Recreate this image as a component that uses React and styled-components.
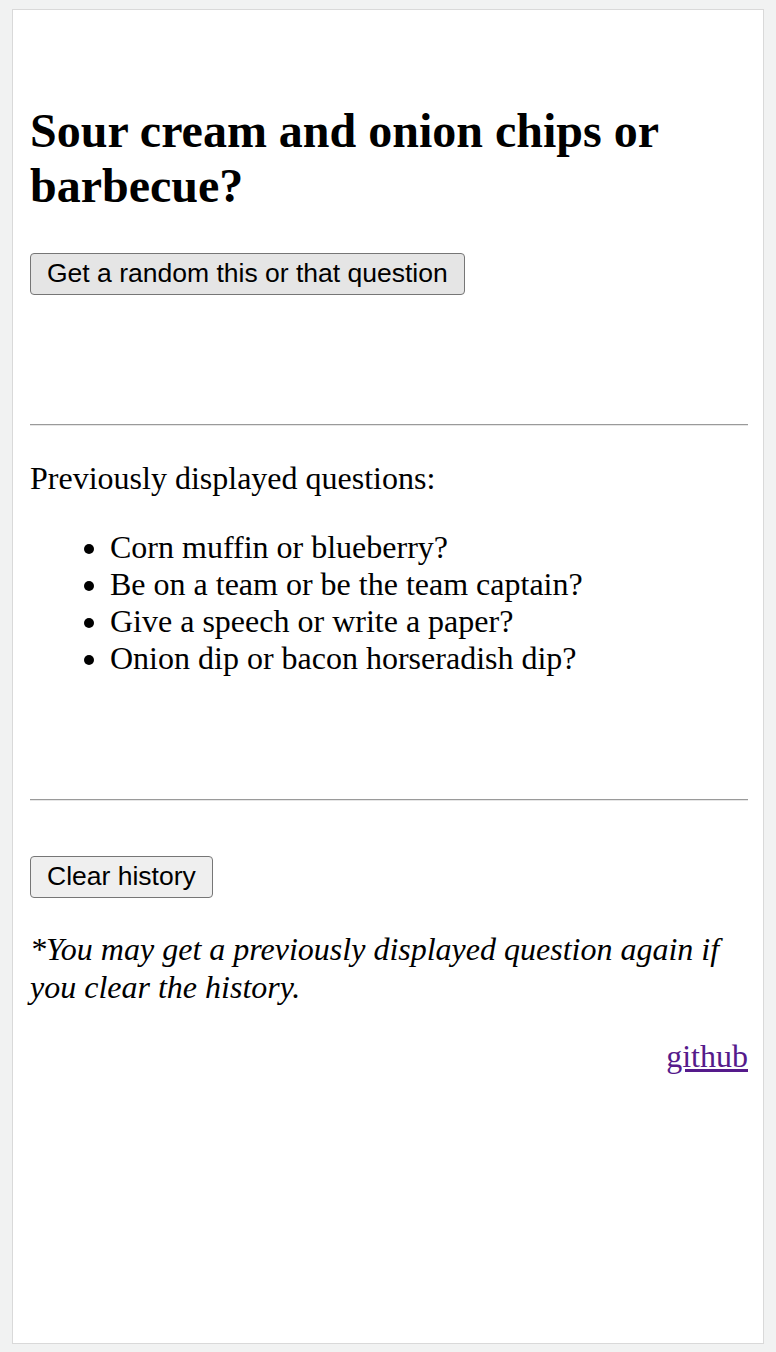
import React, { useState } from 'react';
import styled, { createGlobalStyle } from 'styled-components';

const GlobalStyle = createGlobalStyle`
  html, body {
    margin: 0;
    padding: 0;
    background: #f1f2f2;
  }

  body {
    font-family: "Liberation Serif", "Times New Roman", serif;
    font-size: 32px;
    color: #000;
  }
`;

const Page = styled.div`
  padding: 9px 12px 8px 12px;
`;

const Panel = styled.main`
  box-sizing: border-box;
  width: 752px;
  height: 1335px;
  padding: 60px 15px 0 17px;
  background: #fff;
  border: 1px solid #d9d9d9;
`;

const Question = styled.h1`
  margin: 33px 0 40px;
  font-size: 48px;
  font-weight: 700;
  line-height: 55px;
`;

const Button = styled.button`
  display: block;
  margin-top: ${({ $top }) => $top || 0}px;
  padding: 5px 16px 6px;
  font-family: "Liberation Sans", Arial, sans-serif;
  font-size: 26.5px;
  line-height: 29px;
  color: #000;
  background: ${({ $hover }) => ($hover ? '#e5e5e5' : '#efefef')};
  border: 1px solid #767676;
  border-radius: 4px;
  cursor: pointer;
`;

const Divider = styled.hr`
  height: 0;
  margin: ${({ $top }) => $top}px 0 0;
  border: 0;
  border-top: 1px solid #9a9a9a;
  border-bottom: 1px solid #e6e6e6;
`;

const Label = styled.p`
  margin: 34px 0 32px;
  line-height: 37px;
`;

const HistoryList = styled.ul`
  margin: 0;
  padding-left: 80px;
  line-height: 37px;
`;

const Note = styled.p`
  margin: 32px 0 0;
  font-style: italic;
  line-height: 38px;
`;

const Footer = styled.div`
  margin-top: 32px;
  text-align: right;
  line-height: 37px;
`;

const Link = styled.a`
  color: #551a8b;
`;

const history = [
  'Corn muffin or blueberry?',
  'Be on a team or be the team captain?',
  'Give a speech or write a paper?',
  'Onion dip or bacon horseradish dip?',
];

const App = () => {
  const [items, setItems] = useState(history);

  return (
    <Page>
      <GlobalStyle />
      <Panel>
        <Question>Sour cream and onion chips or barbecue?</Question>
        <Button $hover>Get a random this or that question</Button>
        <Divider $top={129} />
        <Label>Previously displayed questions:</Label>
        <HistoryList>
          {items.map((item) => (
            <li key={item}>{item}</li>
          ))}
        </HistoryList>
        <Divider $top={122} />
        <Button $top={55} onClick={() => setItems([])}>
          Clear history
        </Button>
        <Note>*You may get a previously displayed question again if you clear the history.</Note>
        <Footer>
          <Link href="#">github</Link>
        </Footer>
      </Panel>
    </Page>
  );
};

export default App;
